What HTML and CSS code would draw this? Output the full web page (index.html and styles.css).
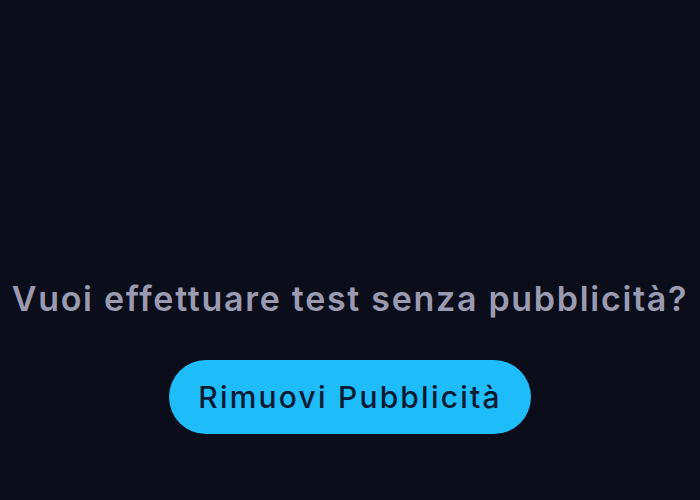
FILE: index.html
```html
<!DOCTYPE html>
<html lang="it">
<head>
  <meta charset="UTF-8" />
  <meta name="viewport" content="width=device-width, initial-scale=1.0" />
  <title>Rimuovi Pubblicità</title>
  <link rel="stylesheet" href="styles.css">
</head>
<body>
  <div class="promo">
    <p class="promo-text">Vuoi effettuare test senza pubblicità?</p>
    <button class="remove-btn">Rimuovi Pubblicità</button>
  </div>
</body>
</html>
```

FILE: styles.css
```css
body {
  font-family: 'Inter', sans-serif;
  margin: 0;
  background: #0b0d1a;
  min-height: 100vh;
}
.promo {
  display: flex;
  flex-direction: column;
  align-items: center;
  padding-top: 279px;
}
.promo-text {
  margin: 0;
  color: #9a9bb0;
  font-size: 34px;
  font-weight: 600;
  line-height: 40px;
  letter-spacing: 1.7px;
  white-space: nowrap;
}
.remove-btn {
  margin-top: 41px;
  width: 362px;
  height: 74px;
  border: none;
  border-radius: 37px;
  background: #1ebcf8;
  color: #0b1a33;
  font-family: 'Inter', sans-serif;
  font-size: 30px;
  font-weight: 500;
  letter-spacing: 2.2px;
  cursor: pointer;
}
```
